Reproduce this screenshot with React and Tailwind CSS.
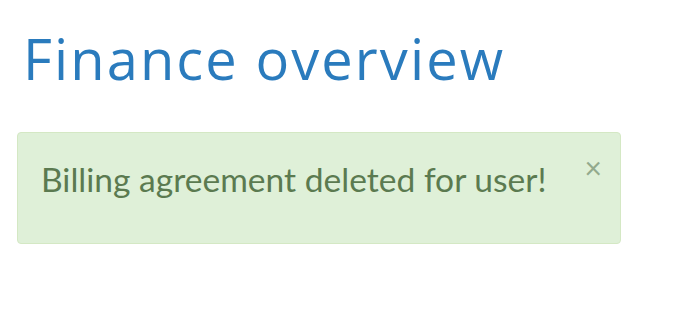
import React from "react";

const App = () => {
  return (
    <div className="w-[680px] h-[320px] bg-white overflow-hidden pl-[17px] pt-[26px]">
      <h1
        className="text-[56px] leading-[64px] tracking-[2.1px] text-[#2a7bbd] pl-[6px] font-medium"
        style={{ fontFamily: "'Open Sans', Lato, sans-serif" }}
      >
        Finance overview
      </h1>

      {/* Success alert */}
      <div
        className="mt-[42px] w-[604px] h-[112px] bg-[#dff0d8] border border-[#d4e8c4] rounded-[4px] flex justify-between items-start pl-[23px] pr-[18px] pt-[26px]"
        style={{ fontFamily: "Lato, 'Open Sans', sans-serif" }}
      >
        <p className="text-[33.6px] leading-[40px] text-[#5b7a50]">
          Billing agreement deleted for user!
        </p>
        <button className="text-[30px] leading-[30px] text-[#93aa8d] mt-[-7px]">
          ×
        </button>
      </div>
    </div>
  );
};

export default App;
